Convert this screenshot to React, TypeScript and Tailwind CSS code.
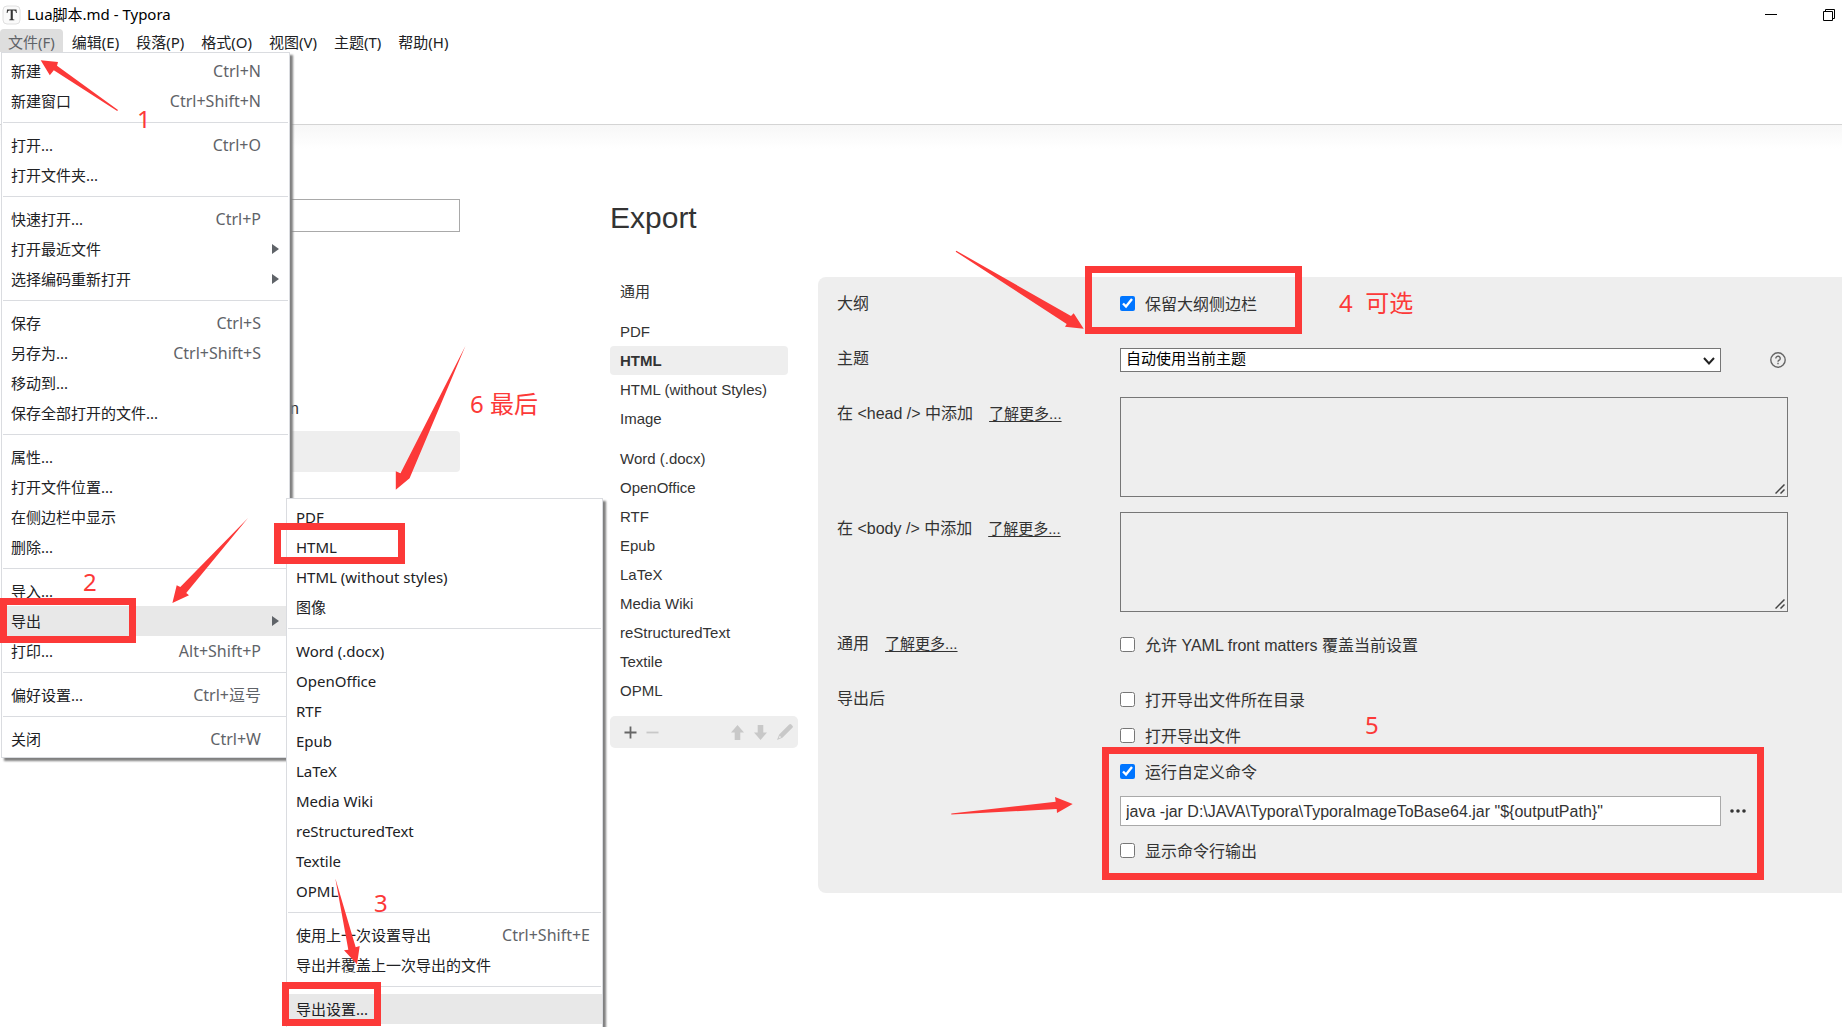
import { Fragment } from 'react';
import clsx from 'clsx';

type Entry = { label: string; keys?: string; sub?: boolean; active?: boolean };

const menuBar = ['文件(F)', '编辑(E)', '段落(P)', '格式(O)', '视图(V)', '主题(T)', '帮助(H)'];

const fileMenu: Entry[][] = [
  [{ label: '新建', keys: 'Ctrl+N' }, { label: '新建窗口', keys: 'Ctrl+Shift+N' }],
  [{ label: '打开...', keys: 'Ctrl+O' }, { label: '打开文件夹...' }],
  [
    { label: '快速打开...', keys: 'Ctrl+P' },
    { label: '打开最近文件', sub: true },
    { label: '选择编码重新打开', sub: true },
  ],
  [
    { label: '保存', keys: 'Ctrl+S' },
    { label: '另存为...', keys: 'Ctrl+Shift+S' },
    { label: '移动到...' },
    { label: '保存全部打开的文件...' },
  ],
  [{ label: '属性...' }, { label: '打开文件位置...' }, { label: '在侧边栏中显示' }, { label: '删除...' }],
  [{ label: '导入...' }, { label: '导出', sub: true, active: true }, { label: '打印...', keys: 'Alt+Shift+P' }],
  [{ label: '偏好设置...', keys: 'Ctrl+逗号' }],
  [{ label: '关闭', keys: 'Ctrl+W' }],
];

const exportMenu: Entry[][] = [
  [{ label: 'PDF' }, { label: 'HTML' }, { label: 'HTML (without styles)' }, { label: '图像' }],
  [
    { label: 'Word (.docx)' },
    { label: 'OpenOffice' },
    { label: 'RTF' },
    { label: 'Epub' },
    { label: 'LaTeX' },
    { label: 'Media Wiki' },
    { label: 'reStructuredText' },
    { label: 'Textile' },
    { label: 'OPML' },
  ],
  [{ label: '使用上一次设置导出', keys: 'Ctrl+Shift+E' }, { label: '导出并覆盖上一次导出的文件' }],
  [{ label: '导出设置...', active: true }],
];

const formats = [
  ['通用'],
  ['PDF', 'HTML', 'HTML (without Styles)', 'Image'],
  ['Word (.docx)', 'OpenOffice', 'RTF', 'Epub', 'LaTeX', 'Media Wiki', 'reStructuredText', 'Textile', 'OPML'],
];

function Menu({ groups, className, keysClass }: { groups: Entry[][]; className: string; keysClass: string }) {
  return (
    <div
      role="menu"
      className={clsx(
        'absolute border border-[#dadce0] bg-white py-[3px] text-[15px] text-[#202124] shadow-[3px_3px_2px_#808080]',
        className
      )}
    >
      {groups.map((group, i) => (
        <Fragment key={i}>
          {i > 0 && <hr className="mx-px mt-[6px] mb-[7px] border-[#dadce0]" />}
          {group.map((item) => (
            <button
              key={item.label}
              role="menuitem"
              className={clsx(
                'flex h-[30px] w-full items-center pl-[9px] text-left whitespace-nowrap',
                item.sub ? 'pr-[10px]' : keysClass,
                item.active && 'bg-[#e8e8e8]'
              )}
            >
              <span className="flex-1">{item.label}</span>
              {item.keys && <span className="text-base text-[#5f6368]">{item.keys}</span>}
              {item.sub && (
                <svg className="h-[10px] w-[7px]" viewBox="0 0 7 10" fill="#5f6368">
                  <path d="M0 0l7 5-7 5z" />
                </svg>
              )}
            </button>
          ))}
        </Fragment>
      ))}
    </div>
  );
}

function Check({ label, checked, className }: { label: string; checked?: boolean; className?: string }) {
  return (
    <label className={clsx('flex h-6 items-center gap-[10px]', className)}>
      <input type="checkbox" defaultChecked={checked} className="h-[15px] w-[15px] accent-[#0075ff]" />
      <span className="pt-[3px]">{label}</span>
    </label>
  );
}

function More() {
  return (
    <a href="#more" className="ml-4 text-[15px] underline underline-offset-2">
      了解更多...
    </a>
  );
}

function CodeBox({ id, className }: { id: string; className: string }) {
  return (
    <div className={clsx('relative', className)}>
      <textarea id={id} className="block h-[100px] w-full resize-none border border-[#767676]" />
      <svg className="absolute right-[3px] bottom-[3px]" width="10" height="10" viewBox="0 0 10 10" stroke="#444" strokeWidth="1.500">
        <path d="M.5 9.500l9-9M5.500 9.500l4-4" />
      </svg>
    </div>
  );
}

function Toolbar() {
  return (
    <div className="mt-[11px] flex h-8 w-[188px] items-center rounded-[5px] bg-[#eee] pr-[5px] pl-[14px]">
      <button aria-label="Add" className="mr-[9px]">
        <svg width="13" height="13" viewBox="0 0 13 13" stroke="#666" strokeWidth="1.800">
          <path d="M.5 6.500h12M6.500.5v12" />
        </svg>
      </button>
      <button aria-label="Remove">
        <svg width="13" height="13" viewBox="0 0 13 13" stroke="#c8c8c8" strokeWidth="1.800">
          <path d="M.5 6.500h12" />
        </svg>
      </button>
      <span className="flex-1" />
      <button aria-label="Move up" className="mr-[10px]">
        <svg width="13" height="15" viewBox="0 0 13 15" fill="#c8c8c8">
          <path d="M6.500 0L13 7.500H9.300V15H3.700V7.500H0z" />
        </svg>
      </button>
      <button aria-label="Move down" className="mr-[10px]">
        <svg width="13" height="15" viewBox="0 0 13 15" fill="#c8c8c8">
          <path d="M6.500 15L0 7.500H3.700V0h5.600v7.500H13z" />
        </svg>
      </button>
      <button aria-label="Edit">
        <svg width="16" height="16" viewBox="0 0 16 16" fill="#c8c8c8">
          <path d="M12.200.6a1.500 1.500 0 012.100 0l1.100 1.100a1.500 1.500 0 010 2.100L5.400 13.800 0 16l2.200-5.400zM2.700 11.700l-1 2.600 2.600-1z" fillRule="evenodd" />
        </svg>
      </button>
    </div>
  );
}

function ExportForm() {
  return (
    <form className="grid flex-1 grid-cols-[283px_1fr] content-start rounded-l-lg bg-[#eee] pt-[14px] pr-[54px] pb-[31px] pl-[19px] text-base leading-6">
      <div className="mt-px">大纲</div>
      <Check label="保留大纲侧边栏" checked />

      <label htmlFor="theme" className="mt-[31px]">主题</label>
      <div className="mt-8 flex h-6 items-center">
        <div className="relative flex-1">
          <select
            id="theme"
            className="block h-6 w-full appearance-none border border-[#767676] bg-white px-[5px] pb-[3px] text-[15px] leading-5 text-black"
          >
            <option>自动使用当前主题</option>
          </select>
          <svg className="pointer-events-none absolute top-[9px] right-[6px]" width="12" height="8" viewBox="0 0 12 8" fill="none" stroke="#222" strokeWidth="2">
            <path d="M1 1l5 5.500L11 1" />
          </svg>
        </div>
        <button type="button" aria-label="Help" className="ml-[49px] w-[18px]">
          <svg width="16" height="16" viewBox="0 0 16 16" fill="none" stroke="#666" strokeWidth="1.400">
            <circle cx="8" cy="8" r="7.200" />
            <path d="M5.800 6.400a2.200 2.200 0 114.200.9c-.5.900-2 1.100-2 2.400" />
            <path d="M8 10.800v1.500" />
          </svg>
        </button>
      </div>

      <div className="mt-[30px]">
        <label htmlFor="head">{'在 <head /> 中添加'}</label>
        <More />
      </div>
      <CodeBox id="head" className="mt-[25px]" />

      <div className="mt-5">
        <label htmlFor="body">{'在 <body /> 中添加'}</label>
        <More />
      </div>
      <CodeBox id="body" className="mt-[15px]" />

      <div className="mt-5">
        通用
        <More />
      </div>
      <Check label="允许 YAML front matters 覆盖当前设置" className="mt-5" />

      <div className="mt-[31px]">导出后</div>
      <div className="mt-[31px] flex flex-col gap-3">
        <Check label="打开导出文件所在目录" />
        <Check label="打开导出文件" />
        <Check label="运行自定义命令" checked />
        <div className="flex h-[31px] items-end">
          <input
            type="text"
            aria-label="运行自定义命令"
            defaultValue={'java -jar D:\\JAVA\\Typora\\TyporaImageToBase64.jar "${outputPath}"'}
            className="h-[30px] flex-1 border border-[#a9a9a9] bg-white px-[5px] pt-px"
          />
          <button type="button" aria-label="Browse" className="flex h-[30px] w-[67px] items-center pl-[9px]">
            <svg width="16" height="4" viewBox="0 0 16 4" fill="#333">
              <circle cx="2" cy="2" r="1.800" />
              <circle cx="8" cy="2" r="1.800" />
              <circle cx="14" cy="2" r="1.800" />
            </svg>
          </button>
        </div>
        <Check label="显示命令行输出" />
      </div>
    </form>
  );
}

function Annotations() {
  return (
    <div className="pointer-events-none absolute inset-0 text-2xl leading-6 text-[#fc3938]">
      <svg className="absolute top-0 left-0" width="1842" height="1027" fill="#fc3938">
        <path d="M40.700 60.300L58 62l-1 3.700 61 44.300-.8 1L53.800 70.300l-4 5z" />
        <path d="M248 518l-61.800 75 2.800 2.300-16.600 7.700 4.300-17.700 3.600 1.700z" />
        <path d="M335.300 878.300l20.400 69 4-1.300-2.700 18.300-13-14 4.300-.6z" />
        <path d="M956.300 250.700L1071 316l2.700-2.700 10 15.400-18.700-2 1.700-2.700L955.700 251.700z" />
        <path d="M951.300 813.600l104.400-11.900-.7-4.700 17.700 7-15.700 9-.3-4-105.400 5.600z" />
        <path d="M465.400 346L409.600 478.300l-13.800 11.400v-18.400l4.700 2z" />
      </svg>
      <div className="absolute top-[598px] left-0 h-[45px] w-[136px] border-7 border-[#fc3938]" />
      <div className="absolute top-[523px] left-[274px] h-[41px] w-[131px] border-7 border-[#fc3938]" />
      <div className="absolute top-[982px] left-[282px] h-[44px] w-[99px] border-7 border-[#fc3938]" />
      <div className="absolute top-[266px] left-[1085px] h-[68px] w-[217px] border-7 border-[#fc3938]" />
      <div className="absolute top-[747px] left-[1102px] h-[133px] w-[662px] border-7 border-[#fc3938]" />
      <span className="absolute top-[107px] left-[137px]">1</span>
      <span className="absolute top-[570px] left-[83px]">2</span>
      <span className="absolute top-[891px] left-[374px]">3</span>
      <span className="absolute top-[291px] left-[1339px] whitespace-pre">4  可选</span>
      <span className="absolute top-[713px] left-[1365px]">5</span>
      <span className="absolute top-[392px] left-[470px]">6 最后</span>
    </div>
  );
}

export default function App() {
  return (
    <div className="relative min-h-screen overflow-hidden bg-white font-['Noto_Sans','Noto_Sans_CJK_SC',sans-serif] text-[#333]">
      <header className="flex h-[29px] items-center pr-[7px] pl-[2px] text-black">
        <svg width="20" height="20" viewBox="0 0 20 20">
          <rect x="1" y="1" width="17" height="18" rx="4" fill="#fafafa" stroke="#e0e0e0" />
          <path d="M5 4.500h9.500l.3 3.500h-.8c-.3-1.800-.8-2.500-2.200-2.500h-1v8c0 .8.300 1 1.500 1.100v.7H7.200v-.7c1.200-.1 1.500-.3 1.500-1.100v-8h-1c-1.400 0-1.900.7-2.200 2.500h-.8z" fill="#333" />
        </svg>
        <h1 className="ml-[5px] flex-1 text-[15px]">Lua脚本.md - Typora</h1>
        <button aria-label="Minimize" className="mr-[46px]">
          <svg width="12" height="12" stroke="#000">
            <path d="M0 5.500h12" />
          </svg>
        </button>
        <button aria-label="Restore">
          <svg width="12" height="12" fill="none" stroke="#000">
            <path d="M.5 2.500h9v9h-9zM2.500 2.500v-2h9v9h-2" />
          </svg>
        </button>
      </header>

      <nav className="flex h-[23px] gap-px text-[15px] text-[#202124]">
        {menuBar.map((name, i) => (
          <button
            key={name}
            className={clsx('h-[23px] px-2 pt-[3px] leading-5', i === 0 && 'rounded-t bg-[#dedede] text-[#5f6368]')}
          >
            {name}
          </button>
        ))}
      </nav>

      <div className="h-[73px] border-b border-[#d4d4d4]" />
      <div className="h-6 bg-linear-to-b from-[#f7f7f7] to-white" />

      <div className="flex font-['Liberation_Sans','Noto_Sans_CJK_SC',sans-serif]">
        <aside className="w-[460px] pt-[50px] pl-10">
          <input type="search" aria-label="Search" className="block h-[33px] w-full border border-[#a9a9a9]" />
          <div className="mt-[165px] pr-[161px] text-right text-base leading-6">n</div>
          <div className="mt-[10px] h-[41px] rounded-sm bg-[#eee]" />
        </aside>

        <main className="ml-[150px] flex-1 pt-[51px]">
          <h2 className="text-3xl leading-9">Export</h2>
          <div className="mt-[41px] flex">
            <div className="w-[208px] text-[15px] leading-[29px]">
              {formats.map((group, i) => (
                <ul key={i} className={clsx('w-[178px]', i > 0 && 'mt-[11px]')}>
                  {group.map((name) => (
                    <li key={name}>
                      <button
                        className={clsx(
                          'block h-[29px] w-full rounded-sm pl-[10px] text-left',
                          name === 'HTML' && 'bg-[#eee] font-bold'
                        )}
                      >
                        {name}
                      </button>
                    </li>
                  ))}
                </ul>
              ))}
              <Toolbar />
            </div>
            <ExportForm />
          </div>
        </main>
      </div>

      <Menu groups={fileMenu} className="top-[52px] left-px w-[289px]" keysClass="pr-[28px]" />
      <Menu groups={exportMenu} className="top-[498px] left-[286px] w-[317px]" keysClass="pr-[12px]" />
      <Annotations />
    </div>
  );
}
